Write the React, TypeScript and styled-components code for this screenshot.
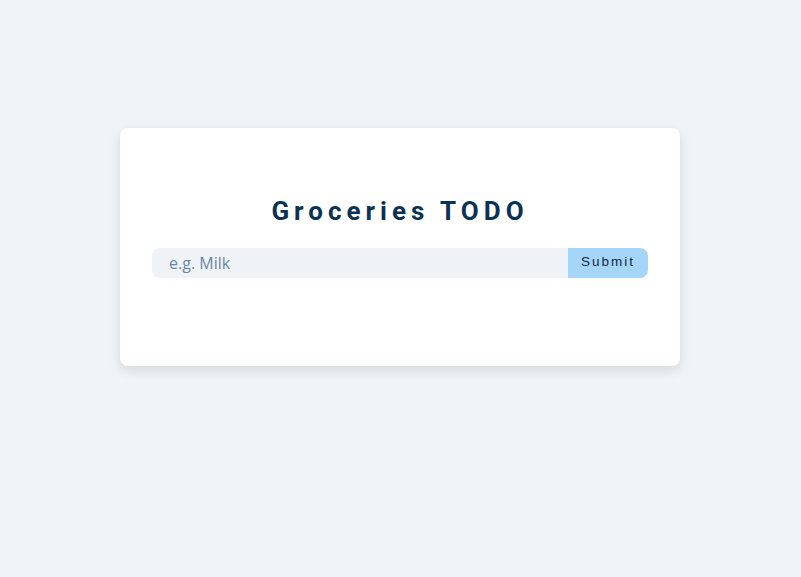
import React, { useState } from 'react';
import styled, { createGlobalStyle } from 'styled-components';

// --- Global ---
const GlobalStyle = createGlobalStyle`
  * { box-sizing: border-box; }
  html, body {
    margin: 0;
    padding: 0;
    background-color: #f0f4f8;
    font-family: 'Open Sans', sans-serif;
  }
`;

// --- Styles ---
const Page = styled.div`
  min-height: 577px;
  padding: 128px 1px 0 0;
  display: flex;
  justify-content: center;
  align-items: flex-start;
`;

const Card = styled.div`
  width: 560px;
  height: 238px;
  padding: 64px 32px 32px;
  background-color: #ffffff;
  border-radius: 8px;
  box-shadow: 0 4px 12px rgba(0, 0, 0, 0.12);
  display: flex;
  flex-direction: column;
  align-items: center;
`;

const Title = styled.h1`
  margin: 0 0 18px;
  font-family: Roboto, sans-serif;
  font-size: 26px;
  font-weight: 700;
  letter-spacing: 5px;
  line-height: 38px;
  color: #0b3252;
`;

const Form = styled.form`
  width: 100%;
  height: 30px;
  display: flex;
`;

const Input = styled.input`
  flex: 1;
  min-width: 0;
  height: 100%;
  padding: 0 17px;
  border: none;
  outline: none;
  border-radius: 8px 0 0 8px;
  background-color: #eff3f7;
  font-family: 'Open Sans', sans-serif;
  font-size: 16px;
  color: #102a43;

  &::placeholder {
    color: #6c86a0;
  }
`;

const SubmitButton = styled.button`
  width: 80px;
  height: 100%;
  padding: 0 0 3px 0;
  border: none;
  border-radius: 0 8px 8px 0;
  background-color: #a6d5fa;
  font-family: 'Liberation Sans', Arial, sans-serif;
  font-size: 13.5px;
  letter-spacing: 2px;
  color: #102a43;
  cursor: pointer;
`;

// --- Component ---
const App: React.FC = () => {
  const [item, setItem] = useState('');

  const handleSubmit = (e: React.FormEvent) => {
    e.preventDefault();
    setItem('');
  };

  return (
    <>
      <GlobalStyle />
      <Page>
        <Card>
          <Title>Groceries TODO</Title>
          <Form onSubmit={handleSubmit}>
            <Input
              type="text"
              placeholder="e.g. Milk"
              value={item}
              onChange={(e) => setItem(e.target.value)}
            />
            <SubmitButton type="submit">Submit</SubmitButton>
          </Form>
        </Card>
      </Page>
    </>
  );
};

export default App;
